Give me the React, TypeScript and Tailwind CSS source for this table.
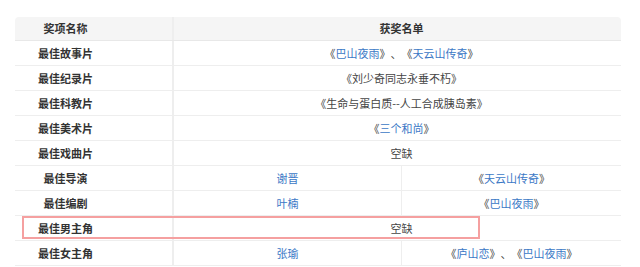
import React from 'react';

type Part = { t: string; link?: boolean };

const ROWS: { label: string; cells: Part[][]; mark?: boolean }[] = [
  { label: '最佳故事片', cells: [[{ t: '《' }, { t: '巴山夜雨', link: true }, { t: '》、《' }, { t: '天云山传奇', link: true }, { t: '》' }]] },
  { label: '最佳纪录片', cells: [[{ t: '《刘少奇同志永垂不朽》' }]] },
  { label: '最佳科教片', cells: [[{ t: '《生命与蛋白质--人工合成胰岛素》' }]] },
  { label: '最佳美术片', cells: [[{ t: '《' }, { t: '三个和尚', link: true }, { t: '》' }]] },
  { label: '最佳戏曲片', cells: [[{ t: '空缺' }]] },
  {
    label: '最佳导演',
    cells: [
      [{ t: '谢晋', link: true }],
      [{ t: '《' }, { t: '天云山传奇', link: true }, { t: '》' }],
    ],
  },
  {
    label: '最佳编剧',
    cells: [
      [{ t: '叶楠', link: true }],
      [{ t: '《' }, { t: '巴山夜雨', link: true }, { t: '》' }],
    ],
  },
  { label: '最佳男主角', cells: [[{ t: '空缺' }]], mark: true },
  {
    label: '最佳女主角',
    cells: [
      [{ t: '张瑜', link: true }],
      [{ t: '《' }, { t: '庐山恋', link: true }, { t: '》、《' }, { t: '巴山夜雨', link: true }, { t: '》' }],
    ],
  },
];

function Text({ parts }: { parts: Part[] }) {
  return (
    <span className="[text-spacing-trim:space-all]">
      {parts.map((p, i) => (
        <span key={i} className={p.link ? 'text-[#3b78c6]' : 'text-[#444]'}>{p.t}</span>
      ))}
    </span>
  );
}

export default function App() {
  return (
    <div
      className="w-[640px] h-[267px] bg-white pt-[17px] pl-[15px] text-[11px] text-[#333]"
      style={{ fontFamily: '"Noto Sans CJK SC", "Liberation Sans", sans-serif' }}
    >
      <div className="w-[606px]">
        <div className="flex h-[24px] bg-[#f5f5f5] rounded-t-[4px] border-b border-[#e8e8e8] font-bold">
          <div className="w-[159px] shrink-0 border-r-2 border-[#eeeeee] flex items-center">
            <span className="w-[101px] text-center">奖项名称</span>
          </div>
          <div className="flex-1 flex items-center justify-center pl-[8px]">获奖名单</div>
        </div>
        {ROWS.map(row => (
          <div key={row.label} className="relative flex h-[25px] border-b border-[#eeeeee]">
            <div className="w-[159px] shrink-0 border-r-2 border-[#eeeeee] flex items-center font-bold">
              <span className="w-[101px] text-center">{row.label}</span>
            </div>
            {row.cells.length === 1 ? (
              <div className="flex-1 flex items-center justify-center pl-[8px]">
                <Text parts={row.cells[0]} />
              </div>
            ) : (
              <>
                <div className="w-[228px] shrink-0 border-r border-[#eeeeee] flex items-center justify-center">
                  <Text parts={row.cells[0]} />
                </div>
                <div className="flex-1 flex items-center justify-center">
                  <Text parts={row.cells[1]} />
                </div>
              </>
            )}
            {row.mark && (
              <div className="absolute left-[7px] top-0 w-[458px] h-[23px] border-2 border-[#f5a0a0]" />
            )}
          </div>
        ))}
      </div>
    </div>
  );
}
